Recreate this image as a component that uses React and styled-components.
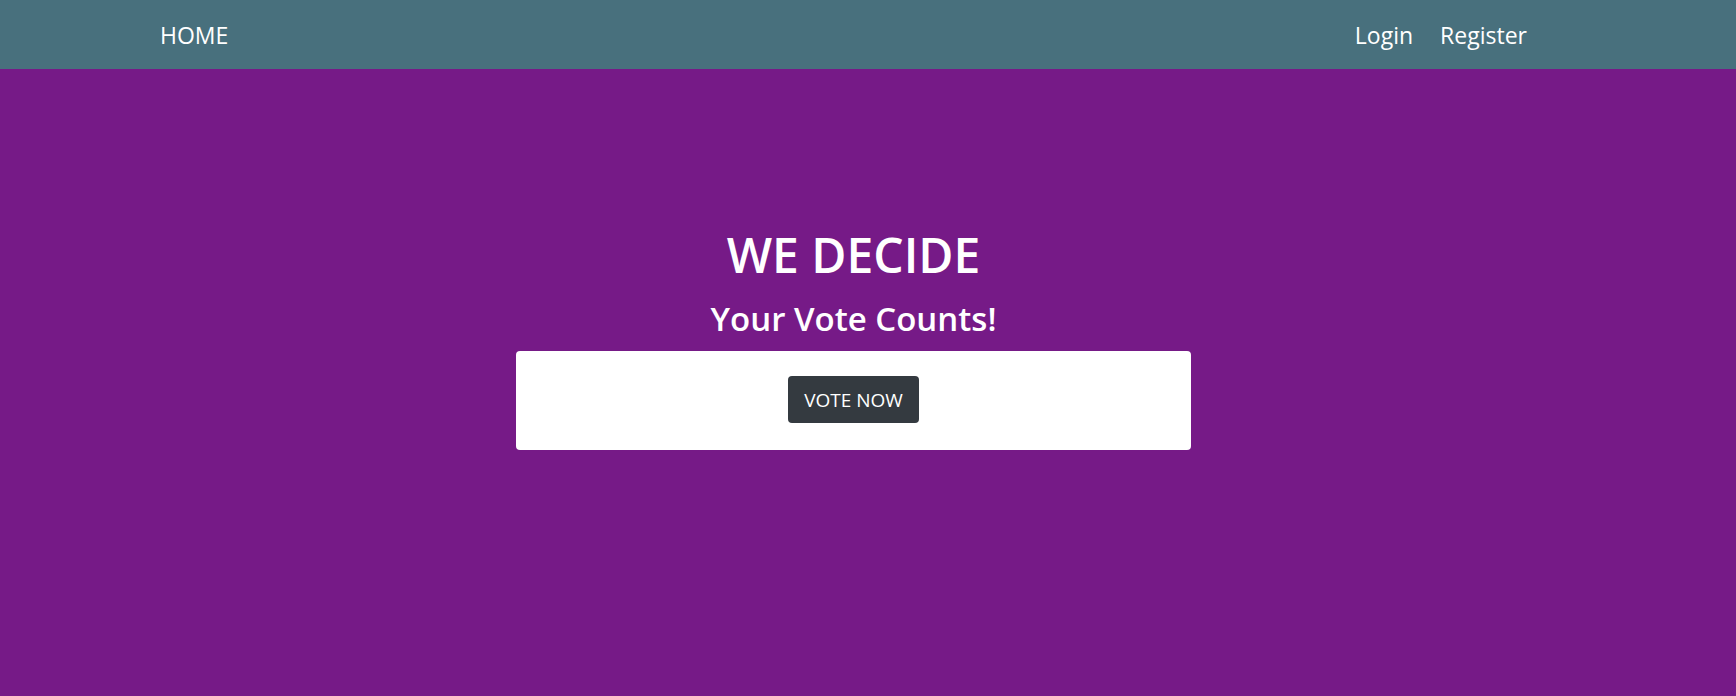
import React from 'react';
import styled, { createGlobalStyle } from "styled-components";

const GlobalStyle = createGlobalStyle`
    html, body {
        margin: 0;
        padding: 0;
        height: 100%;
    }
    body {
        font-family: "Open Sans", "Noto Sans", sans-serif;
        background-color: #761a87;
    }
    #root {
        min-height: 100vh;
    }
`;

function App() {
    return (
        <>
            <GlobalStyle />
            <Page>
                <Navbar>
                    <NavLink href="#">HOME</NavLink>
                    <NavRight>
                        <NavLink href="#">Login</NavLink>
                        <NavLink href="#">Register</NavLink>
                    </NavRight>
                </Navbar>
                <Hero>
                    <Title>WE DECIDE</Title>
                    <Subtitle>Your Vote Counts!</Subtitle>
                    <Card>
                        <VoteButton>VOTE NOW</VoteButton>
                    </Card>
                </Hero>
            </Page>
        </>
    );
}

const Page = styled.div`
    display: flex;
    flex-direction: column;
    min-height: 100vh;
    background-color: #761a87;
`;

const Navbar = styled.nav`
    height: 69px;
    box-sizing: border-box;
    background-color: #48707d;
    display: flex;
    align-items: center;
    justify-content: space-between;
    padding: 0 209px 0 160px;
`;

const NavRight = styled.div`
    display: flex;
    gap: 27px;
`;

const NavLink = styled.a`
    color: #ffffff;
    text-decoration: none;
    font-size: 23px;
    line-height: 1;
    margin-top: 2px;
`;

const Hero = styled.main`
    display: flex;
    flex-direction: column;
    align-items: center;
    padding: 157px 29px 0 0;
    color: #ffffff;
`;

const Title = styled.h1`
    margin: 0;
    font-size: 48px;
    font-weight: 600;
    line-height: 1.2;
`;

const Subtitle = styled.h2`
    margin: 15px 0 0;
    font-size: 33px;
    font-weight: 600;
    line-height: 1.2;
`;

const Card = styled.div`
    width: 675px;
    box-sizing: border-box;
    margin-top: 13px;
    padding: 25px 0 27px;
    background-color: #ffffff;
    border-radius: 4px;
    display: flex;
    justify-content: center;
`;

const VoteButton = styled.button`
    height: 47px;
    padding: 0 16px;
    border: none;
    border-radius: 4px;
    background-color: #343a40;
    color: #ffffff;
    font-family: "Open Sans", "Noto Sans", sans-serif;
    font-size: 19px;
    cursor: pointer;
`;

export default App;
